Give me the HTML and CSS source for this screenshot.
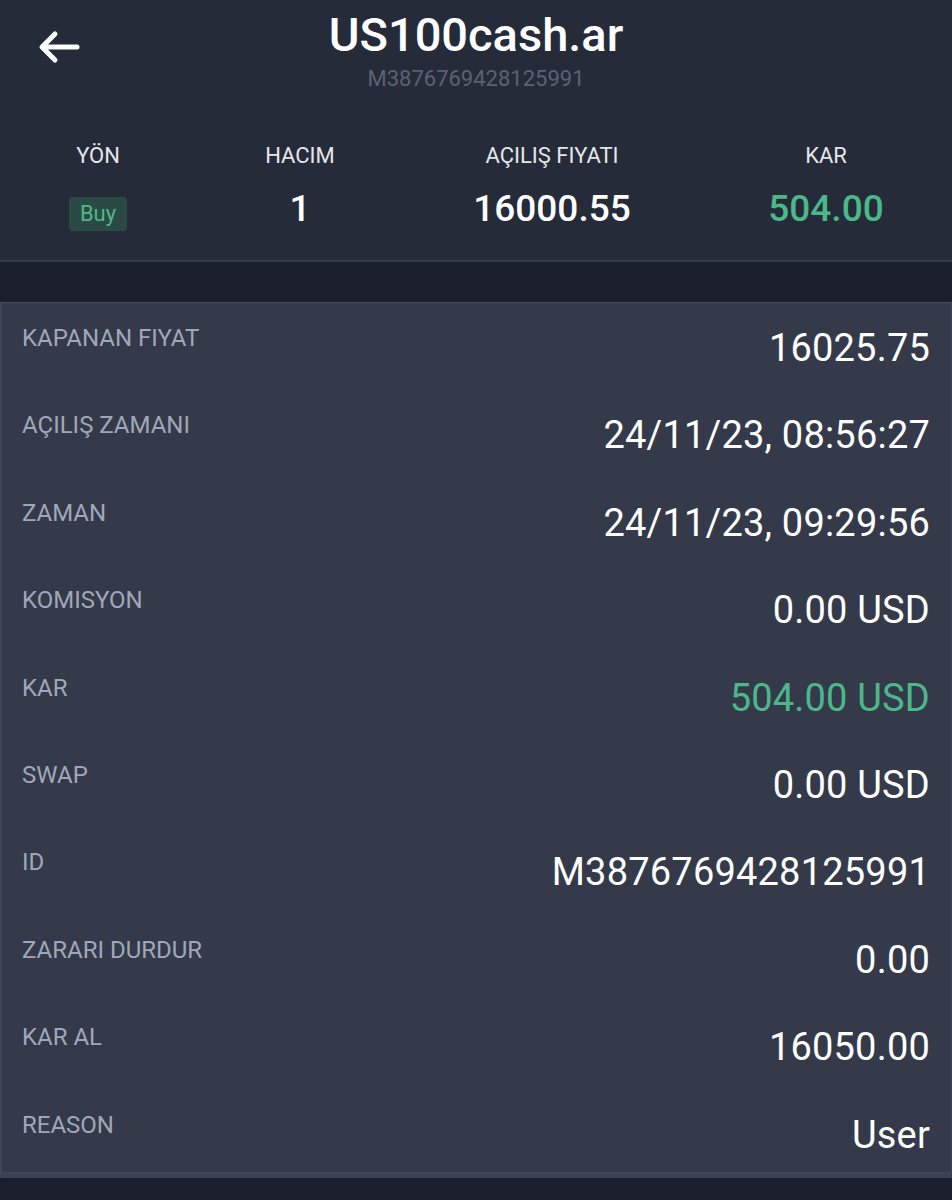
FILE: index.html
```html
<!DOCTYPE html>
<html lang="tr">
<head>
    <meta charset="UTF-8">
    <meta name="viewport" content="width=device-width, initial-scale=1.0">
    <title>US100cash.ar</title>
    <link rel="stylesheet" href="styles.css">
</head>
<body>
    <header class="top">
        <div class="title-bar">
            <a href="#" class="back" aria-label="Geri">
                <svg width="44" height="36" viewBox="0 0 44 36">
                    <path d="M40 18H6M18 5L5 18l13 13" fill="none" stroke="#fff" stroke-width="5" stroke-linecap="round" stroke-linejoin="round"/>
                </svg>
            </a>
            <h1>US100cash.ar</h1>
            <p class="order-id">M3876769428125991</p>
        </div>

        <div class="summary">
            <div class="cell">
                <span class="cell-label">YÖN</span>
                <span class="badge">Buy</span>
            </div>
            <div class="cell">
                <span class="cell-label">HACIM</span>
                <span class="cell-value">1</span>
            </div>
            <div class="cell">
                <span class="cell-label">AÇILIŞ FIYATI</span>
                <span class="cell-value">16000.55</span>
            </div>
            <div class="cell">
                <span class="cell-label">KAR</span>
                <span class="cell-value green">504.00</span>
            </div>
        </div>
    </header>

    <div class="spacer"></div>

    <section class="details">
        <div class="row"><span class="label">KAPANAN FIYAT</span><span class="value">16025.75</span></div>
        <div class="row"><span class="label">AÇILIŞ ZAMANI</span><span class="value">24/11/23, 08:56:27</span></div>
        <div class="row"><span class="label">ZAMAN</span><span class="value">24/11/23, 09:29:56</span></div>
        <div class="row"><span class="label">KOMISYON</span><span class="value">0.00 USD</span></div>
        <div class="row"><span class="label">KAR</span><span class="value green">504.00 USD</span></div>
        <div class="row"><span class="label">SWAP</span><span class="value">0.00 USD</span></div>
        <div class="row"><span class="label">ID</span><span class="value">M3876769428125991</span></div>
        <div class="row"><span class="label">ZARARI DURDUR</span><span class="value">0.00</span></div>
        <div class="row"><span class="label">KAR AL</span><span class="value">16050.00</span></div>
        <div class="row"><span class="label">REASON</span><span class="value">User</span></div>
    </section>
</body>
</html>
```

FILE: styles.css
```css
/* Pagina */
body {
    margin: 0;
    padding: 0;
    background-color: #1b1f2d;
    font-family: Roboto, "Liberation Sans", sans-serif;
    color: #fff;
}

/* Cabecera */
.top {
    background-color: #262b3a;
    border-bottom: 2px solid #353b4a;
    height: 260px;
}

.title-bar {
    position: relative;
    text-align: center;
    padding-top: 7px;
}

.back {
    position: absolute;
    left: 37px;
    top: 29px;
    display: block;
    line-height: 0;
}

.title-bar h1 {
    margin: 0;
    font-size: 47px;
    font-weight: 500;
    line-height: 56px;
}

.order-id {
    margin: 2px 0 0;
    font-size: 22px;
    line-height: 28px;
    color: #5b6272;
}

/* Resumen con cuatro columnas */
.summary {
    display: grid;
    grid-template-columns: 196px 208px 296px 1fr;
    margin-top: 49px;
}

.cell {
    display: flex;
    flex-direction: column;
    align-items: center;
}

.cell-label {
    font-size: 22px;
    line-height: 28px;
    color: #e4e6ea;
}

.cell-value {
    margin-top: 18px;
    font-size: 37px;
    font-weight: 500;
    line-height: 42px;
}

.badge {
    margin-top: 27px;
    padding: 2px 11px;
    font-size: 22px;
    line-height: 30px;
    color: #4cb88a;
    background-color: #2c4a45;
    border-radius: 4px;
}

.green {
    color: #4cb88a;
}

.spacer {
    height: 40px;
}

/* Lista de detalles */
.details {
    background-color: #343a4a;
    border-top: 1px solid #464d5e;
    border-left: 2px solid #40475a;
    border-right: 2px solid #3a4051;
    border-bottom: 5px solid #3b4252;
    padding-top: 9px;
    box-shadow: inset 0 -1px 0 #424959;
}

.row {
    display: flex;
    justify-content: space-between;
    align-items: flex-start;
    height: 87.4px;
    padding: 0 20px;
}

.row:last-child {
    height: 74px;
}

.label {
    padding-top: 11px;
    font-size: 24px;
    line-height: 30px;
    color: #a0a7b8;
}

.value {
    padding-top: 14px;
    font-size: 38px;
    line-height: 44px;
    letter-spacing: 0.2px;
}
```
